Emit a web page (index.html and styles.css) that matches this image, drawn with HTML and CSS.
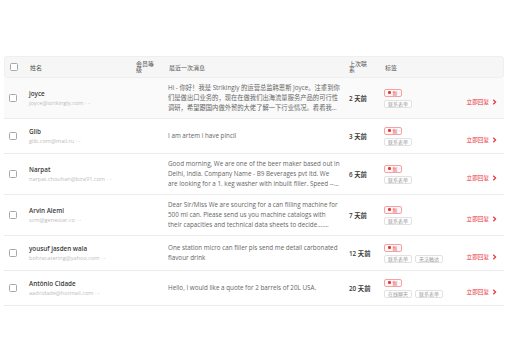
FILE: index.html
```html
<!DOCTYPE html>
<html lang="zh-CN">
<head>
    <meta charset="UTF-8">
    <title>联系人</title>
    <link rel="stylesheet" href="styles.css">
</head>
<body>
    <div class="inbox">
        <div class="inbox-head">
            <div class="cell"><span class="check"></span></div>
            <div class="cell">姓名</div>
            <div class="cell narrow">会员等级</div>
            <div class="cell">最近一次消息</div>
            <div class="cell narrow">上次联系</div>
            <div class="cell">标签</div>
            <div class="cell"></div>
        </div>

        <div class="inbox-row is-hover">
            <div class="cell"><span class="check"></span></div>
            <div class="cell person">
                <div class="name">joyce</div>
                <div class="email">joyce@strikingly.com <span>· -</span></div>
            </div>
            <div class="cell"></div>
            <div class="cell message">Hi - 你好！我是 Strikingly 的运营总监韩恩斯 Joyce。注重到你们是做出口业务的，现在在做我们出海流量服务产品的可行性调研，希望跟国内做外贸的大佬了解一下行业情况。看看我们的产品能不能帮到你们。</div>
            <div class="cell when">2 天前</div>
            <div class="cell tags">
                <span class="tag tag-new">新</span>
                <div class="tag-line"><span class="tag">联系表单</span></div>
            </div>
            <div class="cell"><a class="reply" href="#">立即回复 <svg width="5" height="6" viewBox="0 0 5 6"><path d="M1.3 0.8 L3.6 3 L1.3 5.2" fill="none" stroke="currentColor" stroke-width="1.2"/></svg></a></div>
        </div>

        <div class="inbox-row">
            <div class="cell"><span class="check"></span></div>
            <div class="cell person">
                <div class="name">Glib</div>
                <div class="email">glib.com@mail.ru <span>· -</span></div>
            </div>
            <div class="cell"></div>
            <div class="cell message">I am artem i have pincil</div>
            <div class="cell when">3 天前</div>
            <div class="cell tags">
                <span class="tag tag-new">新</span>
                <div class="tag-line"><span class="tag">联系表单</span></div>
            </div>
            <div class="cell"><a class="reply" href="#">立即回复 <svg width="5" height="6" viewBox="0 0 5 6"><path d="M1.3 0.8 L3.6 3 L1.3 5.2" fill="none" stroke="currentColor" stroke-width="1.2"/></svg></a></div>
        </div>

        <div class="inbox-row">
            <div class="cell"><span class="check"></span></div>
            <div class="cell person">
                <div class="name">Narpat</div>
                <div class="email">narpat.chouhan@bira91.com <span>· -</span></div>
            </div>
            <div class="cell"></div>
            <div class="cell message">Good morning, We are one of the beer maker based out in Delhi, India. Company Name - B9 Beverages pvt ltd. We are looking for a 1. keg washer with inbuilt filler. Speed -- 60 kegs per hour 2. can filler</div>
            <div class="cell when">6 天前</div>
            <div class="cell tags">
                <span class="tag tag-new">新</span>
                <div class="tag-line"><span class="tag">联系表单</span></div>
            </div>
            <div class="cell"><a class="reply" href="#">立即回复 <svg width="5" height="6" viewBox="0 0 5 6"><path d="M1.3 0.8 L3.6 3 L1.3 5.2" fill="none" stroke="currentColor" stroke-width="1.2"/></svg></a></div>
        </div>

        <div class="inbox-row">
            <div class="cell"><span class="check"></span></div>
            <div class="cell person">
                <div class="name">Arvin Alemi</div>
                <div class="email">scm@genestar.co <span>· -</span></div>
            </div>
            <div class="cell"></div>
            <div class="cell message">Dear Sir/Miss We are sourcing for a can filling machine for 500 ml can. Please send us you machine catalogs with their capacities and technical data sheets to decide.... thanks</div>
            <div class="cell when">7 天前</div>
            <div class="cell tags">
                <span class="tag tag-new">新</span>
                <div class="tag-line"><span class="tag">联系表单</span></div>
            </div>
            <div class="cell"><a class="reply" href="#">立即回复 <svg width="5" height="6" viewBox="0 0 5 6"><path d="M1.3 0.8 L3.6 3 L1.3 5.2" fill="none" stroke="currentColor" stroke-width="1.2"/></svg></a></div>
        </div>

        <div class="inbox-row">
            <div class="cell"><span class="check"></span></div>
            <div class="cell person">
                <div class="name">yousuf jasden wala</div>
                <div class="email">bohracatering@yahoo.com <span>· -</span></div>
            </div>
            <div class="cell"></div>
            <div class="cell message">One station micro can filler pls send me detail carbonated flavour drink</div>
            <div class="cell when">12 天前</div>
            <div class="cell tags">
                <span class="tag tag-new">新</span>
                <div class="tag-line"><span class="tag">联系表单</span><span class="tag">无法触达</span></div>
            </div>
            <div class="cell"><a class="reply" href="#">立即回复 <svg width="5" height="6" viewBox="0 0 5 6"><path d="M1.3 0.8 L3.6 3 L1.3 5.2" fill="none" stroke="currentColor" stroke-width="1.2"/></svg></a></div>
        </div>

        <div class="inbox-row">
            <div class="cell"><span class="check"></span></div>
            <div class="cell person">
                <div class="name">Antônio Cidade</div>
                <div class="email">aadcidade@hotmail.com <span>· -</span></div>
            </div>
            <div class="cell"></div>
            <div class="cell message">Hello, I would like a quote for 2 barrels of 20L USA.</div>
            <div class="cell when">20 天前</div>
            <div class="cell tags">
                <span class="tag tag-new">新</span>
                <div class="tag-line"><span class="tag">在线聊天</span><span class="tag">联系表单</span></div>
            </div>
            <div class="cell"><a class="reply" href="#">立即回复 <svg width="5" height="6" viewBox="0 0 5 6"><path d="M1.3 0.8 L3.6 3 L1.3 5.2" fill="none" stroke="currentColor" stroke-width="1.2"/></svg></a></div>
        </div>
    </div>
</body>
</html>
```

FILE: styles.css
```css
* {
    margin: 0;
    padding: 0;
    box-sizing: border-box;
}

:root {
    --red: #e8333c;
    --red-border: #f3a3a6;
    --red-bg: #fff6f6;
    --line: #ececec;
    --text: #333333;
    --text-soft: #666666;
    --text-muted: #bdbdbd;
}

body {
    font-family: "Open Sans", "Noto Sans CJK SC", sans-serif;
    background: #ffffff;
    color: var(--text);
    padding: 56px 8px 0 4px;
}

.inbox-head,
.inbox-row {
    display: grid;
    grid-template-columns: 25px 106px 33px 180px 36px 1fr auto;
    align-items: center;
}

.inbox-head {
    height: 22px;
    background: #f6f6f6;
    border: 1px solid #efefef;
    border-radius: 3px;
    font-size: 6px;
    color: #555;
}

.inbox-head .narrow {
    width: 20px;
    line-height: 1;
}

.inbox-row {
    padding: 5px 0;
    border-bottom: 1px solid var(--line);
}

.inbox-row.is-hover {
    background: #fafafa;
}

.check {
    display: block;
    width: 8px;
    height: 8px;
    margin-left: 5px;
    border: 1px solid #a8a8a8;
    border-radius: 1.5px;
    background: #fff;
}

.person .name {
    font-size: 6.3px;
    font-weight: 600;
    color: #3a3a3a;
    line-height: 9px;
}

.person .email {
    font-size: 5.6px;
    color: var(--text-muted);
    line-height: 9px;
    margin-top: 1px;
}

.message {
    font-size: 6.3px;
    line-height: 10px;
    color: var(--text-soft);
    padding-right: 8px;
    display: -webkit-box;
    -webkit-box-orient: vertical;
    -webkit-line-clamp: 3;
    overflow: hidden;
}

.when {
    font-size: 6.3px;
    font-weight: 600;
    color: #3a3a3a;
    padding-left: 1px;
}

.tags {
    padding: 2.5px 0;
    display: flex;
    flex-direction: column;
    align-items: flex-start;
    gap: 3px;
}

.tag-line {
    display: flex;
    gap: 3px;
}

.tag {
    display: inline-flex;
    align-items: center;
    height: 8px;
    padding: 0 3px;
    font-size: 5px;
    color: #9a9a9a;
    border: 1px solid #e2e2e2;
    border-radius: 2px;
    background: #fff;
}

.tag-new {
    color: var(--red);
    border-color: var(--red-border);
    background: var(--red-bg);
    gap: 2px;
}

.tag-new::before {
    content: '';
    width: 2.5px;
    height: 2.5px;
    border-radius: 50%;
    background: var(--red);
}

.reply {
    display: inline-flex;
    align-items: center;
    gap: 3px;
    margin-right: 7px;
    font-size: 5.6px;
    color: var(--red);
    text-decoration: none;
}
```
